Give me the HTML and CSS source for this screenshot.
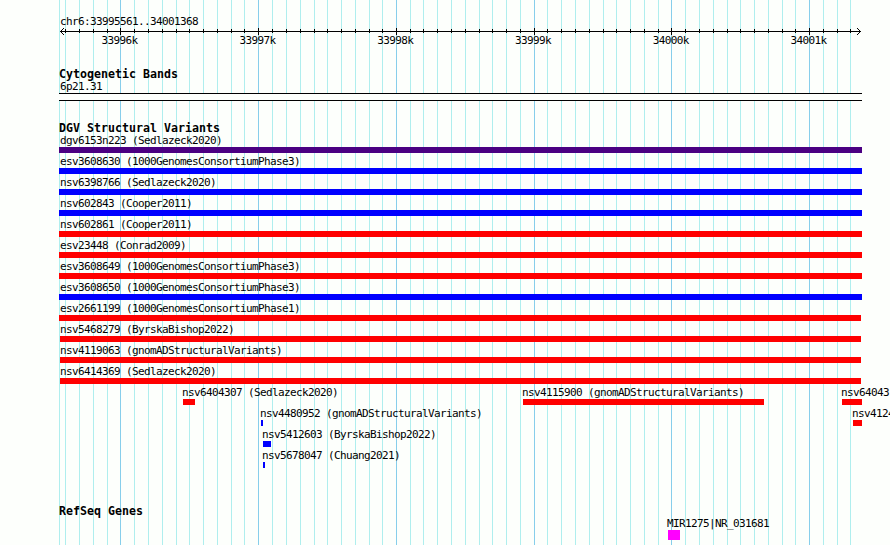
FILE: index.html
```html
<!DOCTYPE html>
<html>
<head>
    <meta charset="utf-8">
    <title>chr6:33995561..34001368</title>
    <link rel="stylesheet" href="styles.css">
</head>
<body>
    <svg class="grid" id="grid" width="890" height="545" shape-rendering="crispEdges"></svg>
    <div class="browser">
        <div class="region">chr6:33995561..34001368</div>
        <svg class="ruler" id="ruler" width="890" height="8" shape-rendering="crispEdges">
            <rect x="60" y="3" width="801" height="1"/>
            <path d="M61 2h1v1h-1zM62 1h1v1h-1zM63 0h1v1h-1zM61 4h1v1h-1zM62 5h1v1h-1zM63 6h1v1h-1z"/>
            <path d="M859 2h1v1h-1zM858 1h1v1h-1zM857 0h1v1h-1zM859 4h1v1h-1zM858 5h1v1h-1zM857 6h1v1h-1z"/>
        </svg>
        <div class="scale">
            <span>33996k</span>
            <span>33997k</span>
            <span>33998k</span>
            <span>33999k</span>
            <span>34000k</span>
            <span>34001k</span>
        </div>

        <h2 class="bands-title">Cytogenetic Bands</h2>
        <div class="band-name">6p21.31</div>
        <div class="band"></div>

        <h2 class="variants-title">DGV Structural Variants</h2>
        <div class="track" id="variants"></div>

        <h2 class="genes-title">RefSeq Genes</h2>
        <div class="track genes" id="genes"></div>
    </div>
    <script src="script.js"></script>
</body>
</html>
```
FILE: styles.css
```css
body {
    margin: 0;
    width: 890px;
    height: 545px;
    overflow: hidden;
    background: #fdfffc;
    color: #000;
    font-family: "DejaVu Sans Mono", "Liberation Mono", monospace;
    font-size: 11px;
    letter-spacing: -0.622px;
    line-height: 13px;
}

.grid {
    position: absolute;
    top: 0;
    left: 0;
}

.grid .minor {
    fill: #afeeee;
}

.grid .major {
    fill: #87ceeb;
}

.browser {
    position: relative;
    width: 890px;
    height: 545px;
    overflow: hidden;
    display: flex;
    flex-direction: column;
}

.region {
    margin: 15px 0 0 60px;
    height: 13px;
}

.ruler {
    display: block;
    flex: none;
}

.scale {
    display: grid;
    grid-template-columns: repeat(6, 137.8px);
    margin: -2px 0 0 101.6px;
    height: 13px;
}

h2 {
    margin: 0 0 0 59px;
    height: 12px;
    font-size: 11.6px;
    font-weight: bold;
    letter-spacing: 0.016px;
    line-height: 13px;
}

.bands-title {
    margin-top: 21px;
}

.band-name {
    margin-left: 60px;
    height: 13px;
}

.band {
    box-sizing: border-box;
    flex: none;
    width: 803px;
    height: 8px;
    margin-left: 59px;
    border-top: 1px solid #000;
    border-bottom: 1px solid #000;
    background: #fdfffc;
}

.variants-title {
    margin-top: 21px;
}

.track {
    height: 336px;
}

.lane {
    position: relative;
    height: 21px;
}

/* features sit at their genome position inside a lane */
.feature {
    position: absolute;
    top: 0;
    white-space: nowrap;
}

.label {
    height: 13px;
}

.bar {
    height: 6px;
}

.gain {
    background: #00f;
}

.loss {
    background: #f00;
}

.complex {
    background: #4b0082;
}

.genes-title {
    margin-top: 35px;
}

.genes .bar {
    height: 10px;
}

.gene {
    background: #f0f;
}
```
FILE: script.js
```javascript
var major = [120, 258, 396, 534, 671, 809];
var minor = [
    65, 79, 93, 107, 134, 148, 162, 176, 189, 203, 217, 231, 244,
    272, 286, 300, 314, 327, 341, 355, 369, 382,
    410, 423, 437, 451, 465, 479, 492, 506, 520,
    547, 561, 575, 589, 603, 616, 630, 644, 658,
    685, 699, 713, 727, 740, 754, 768, 782, 795,
    823, 837, 850
];

// [name, left, bar width, type]
var variants = [
    [["dgv6153n223 (Sedlazeck2020)", 59, 803, "complex"]],
    [["esv3608630 (1000GenomesConsortiumPhase3)", 59, 803, "gain"]],
    [["nsv6398766 (Sedlazeck2020)", 59, 803, "gain"]],
    [["nsv602843 (Cooper2011)", 59, 803, "gain"]],
    [["nsv602861 (Cooper2011)", 59, 803, "loss"]],
    [["esv23448 (Conrad2009)", 59, 803, "loss"]],
    [["esv3608649 (1000GenomesConsortiumPhase3)", 59, 803, "loss"]],
    [["esv3608650 (1000GenomesConsortiumPhase3)", 59, 803, "gain"]],
    [["esv2661199 (1000GenomesConsortiumPhase1)", 59, 802, "loss"]],
    [["nsv5468279 (ByrskaBishop2022)", 60, 801, "loss"]],
    [["nsv4119063 (gnomADStructuralVariants)", 60, 801, "loss"]],
    [["nsv6414369 (Sedlazeck2020)", 60, 801, "loss"]],
    [
        ["nsv6404307 (Sedlazeck2020)", 183, 12, "loss"],
        ["nsv4115900 (gnomADStructuralVariants)", 523, 241, "loss"],
        ["nsv64043", 842, 20, "loss"]
    ],
    [
        ["nsv4480952 (gnomADStructuralVariants)", 261, 2, "gain"],
        ["nsv4124", 853, 9, "loss"]
    ],
    [["nsv5412603 (ByrskaBishop2022)", 263, 8, "gain"]],
    [["nsv5678047 (Chuang2021)", 263, 2, "gain"]]
];

var genes = [[["MIR1275|NR_031681", 668, 12, "gene"]]];

function addRect(svg, x, y, height, className) {
    var rect = document.createElementNS("http://www.w3.org/2000/svg", "rect");
    rect.setAttribute("x", x);
    rect.setAttribute("y", y);
    rect.setAttribute("width", 1);
    rect.setAttribute("height", height);
    rect.setAttribute("class", className);
    svg.appendChild(rect);
}

function drawTrack(id, lanes) {
    var track = document.getElementById(id);
    lanes.forEach(function (features) {
        var lane = document.createElement("div");
        lane.className = "lane";
        features.forEach(function (f) {
            var feature = document.createElement("div");
            var label = document.createElement("div");
            var bar = document.createElement("div");
            feature.className = "feature";
            feature.style.left = f[1] + "px";
            label.className = "label";
            label.textContent = f[0];
            // labels start 1px before the bar, but never left of x = 60
            label.style.marginLeft = Math.max(60, f[1] - 1) - f[1] + "px";
            bar.className = "bar " + f[3];
            bar.style.width = f[2] + "px";
            feature.appendChild(label);
            feature.appendChild(bar);
            lane.appendChild(feature);
        });
        track.appendChild(lane);
    });
}

var grid = document.getElementById("grid");
var ruler = document.getElementById("ruler");

addRect(grid, 59, 0, 545, "minor");
minor.forEach(function (x) {
    addRect(grid, x, 0, 545, "minor");
    addRect(ruler, x, 1, 4, "tick");
});
major.forEach(function (x) {
    addRect(grid, x, 0, 545, "major");
    addRect(ruler, x, 0, 7, "tick");
});

drawTrack("variants", variants);
drawTrack("genes", genes);
```
